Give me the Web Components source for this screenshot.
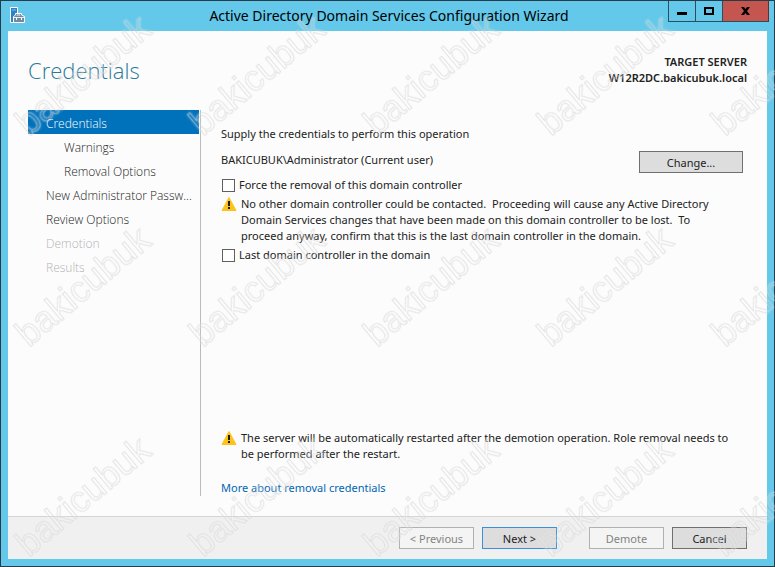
<!DOCTYPE html>
<html lang="en">
<head>
  <meta charset="utf-8">
  <title>Active Directory Domain Services Configuration Wizard</title>
  <style>
    body {
      margin: 0;
      background: #63c8ea;
    }
  </style>
</head>
<body>
  <wizard-window>
    <title-bar slot="title">Active Directory Domain Services Configuration Wizard</title-bar>
    <page-header slot="header" heading="Credentials" server="W12R2DC.bakicubuk.local"></page-header>
    <step-list slot="steps">
      <step-item state="current">Credentials</step-item>
      <step-item level="2">Warnings</step-item>
      <step-item level="2">Removal Options</step-item>
      <step-item>New Administrator Passw...</step-item>
      <step-item>Review Options</step-item>
      <step-item state="disabled">Demotion</step-item>
      <step-item state="disabled">Results</step-item>
    </step-list>
    <credentials-page></credentials-page>
    <wizard-button slot="buttons" disabled>&lt; Previous</wizard-button>
    <wizard-button slot="buttons" primary>Next &gt;</wizard-button>
    <wizard-button slot="actions" disabled>Demote</wizard-button>
    <wizard-button slot="actions">Cancel</wizard-button>
  </wizard-window>
  <water-mark text="bakicubuk"></water-mark>

  <script>
    class WizardWindow extends HTMLElement {
      constructor() {
        super();
        this.attachShadow({ mode: 'open' }).innerHTML = `
          <style>
            :host {
              display: flex;
              flex-direction: column;
              box-sizing: border-box;
              min-height: 100vh;
              padding-bottom: 7px;
              border: 1px solid #263c48;
              background: #63c8ea;
              color: #222;
              font: 11px/16px "Noto Sans", "Open Sans", sans-serif;
            }
            .client {
              flex: 1;
              display: flex;
              flex-direction: column;
              margin: 0 7px;
              background: #fcfcfc;
            }
            .body {
              flex: 1;
              display: grid;
              grid-template-columns: 172px 1fr;
              padding: 0 20px;
            }
            footer {
              display: flex;
              justify-content: flex-end;
              gap: 32px;
              padding: 10px 20px;
              border-top: 1px solid #d4d4d4;
              background: #f0f0f0;
            }
            .group {
              display: flex;
              gap: 8px;
            }
            main {
              display: flex;
              flex-direction: column;
              margin-bottom: 20px;
              padding-left: 20px;
              border-left: 1px solid #bbb;
            }
          </style>
          <slot name="title"></slot>
          <div class="client">
            <slot name="header"></slot>
            <div class="body">
              <slot name="steps"></slot>
              <main><slot></slot></main>
            </div>
            <footer>
              <div class="group"><slot name="buttons"></slot></div>
              <div class="group"><slot name="actions"></slot></div>
            </footer>
          </div>
        `;
      }
    }

    class TitleBar extends HTMLElement {
      constructor() {
        super();
        this.attachShadow({ mode: 'open' }).innerHTML = `
          <style>
            :host {
              display: grid;
              grid-template-columns: 1fr auto 1fr;
              height: 30px;
              padding: 0 5px 0 8px;
              color: #000;
              font-size: 14px;
              line-height: 30px;
              white-space: nowrap;
            }
            .icon {
              margin-top: 6px;
            }
            .controls {
              display: flex;
              justify-content: flex-end;
              align-items: flex-start;
            }
            button {
              display: flex;
              align-items: center;
              justify-content: center;
              box-sizing: border-box;
              width: 27px;
              height: 21px;
              margin: 0;
              padding: 0;
              border: 1px solid #2c4d5c;
              border-top: 0;
              border-right: 0;
              background: none;
            }
            .close {
              width: 47px;
              border-right: 1px solid #6b2d28;
              background: #c4564f;
            }
          </style>
          <svg class="icon" width="17" height="17" viewBox="0 0 17 17">
            <path d="M1.500 .5h7v15h-7z" fill="#2a85c8" stroke="#fff"/>
            <path d="M3 3h4" stroke="#7fbce2"/>
            <path d="M4.500 9.500L6.500 8V6.500h6V8l3 1.500v6h-11z" fill="#74899c" stroke="#fff"/>
            <path d="M8 8.500V8h3v.5" fill="none" stroke="#dfe9f2"/>
            <path d="M5 10.500h10" stroke="#e8eef4"/>
            <path d="M7.500 11v2M12.500 11v2" stroke="#fff"/>
          </svg>
          <slot></slot>
          <div class="controls">
            <button aria-label="Minimize">
              <svg width="10" height="10"><path d="M0 6h10v3H0z"/></svg>
            </button>
            <button aria-label="Maximize">
              <svg width="10" height="8"><path d="M1 1h8v6H1z" fill="none" stroke="#000" stroke-width="2"/></svg>
            </button>
            <button class="close" aria-label="Close">
              <svg width="9" height="8"><path d="M0 0h3l1.500 2L6 0h3L6 4l3 4H6L4.500 6 3 8H0l3-4z"/></svg>
            </button>
          </div>
        `;
      }
    }

    class PageHeader extends HTMLElement {
      connectedCallback() {
        this.attachShadow({ mode: 'open' }).innerHTML = `
          <style>
            :host {
              display: flex;
              justify-content: space-between;
              padding: 23px 20px 24px;
            }
            h1 {
              margin: 0;
              color: #2b7a9b;
              font-family: "Open Sans", sans-serif;
              font-size: 22px;
              font-weight: 300;
              line-height: 32px;
            }
            .server {
              font-weight: 600;
              text-align: right;
            }
          </style>
          <h1>${this.getAttribute('heading')}</h1>
          <div class="server">
            <div>TARGET SERVER</div>
            <div>${this.getAttribute('server')}</div>
          </div>
        `;
      }
    }

    class StepList extends HTMLElement {
      constructor() {
        super();
        this.attachShadow({ mode: 'open' }).innerHTML = `
          <style>
            nav {
              margin-right: 1px;
            }
          </style>
          <nav><slot></slot></nav>
        `;
      }
    }

    class StepItem extends HTMLElement {
      constructor() {
        super();
        this.attachShadow({ mode: 'open' }).innerHTML = `
          <style>
            :host {
              display: block;
              padding: 4px 0 0 18px;
              color: #222;
              font-family: "Open Sans", sans-serif;
              font-size: 12px;
              font-weight: 300;
              line-height: 20px;
              white-space: nowrap;
            }
            :host([level="2"]) {
              padding-left: 36px;
            }
            :host([state="current"]) {
              background: #0072bc;
              color: #fff;
            }
            :host([state="disabled"]) {
              color: #b4b4b4;
            }
          </style>
          <slot></slot>
        `;
      }
    }

    class WizardButton extends HTMLElement {
      connectedCallback() {
        const disabled = this.hasAttribute('disabled') ? 'disabled' : '';
        this.attachShadow({ mode: 'open' }).innerHTML = `
          <style>
            :host {
              display: block;
              width: 75px;
            }
            button {
              display: block;
              box-sizing: border-box;
              width: 100%;
              height: 22px;
              margin: 0;
              padding: 1px 0 0;
              border: 1px solid #707070;
              background: #ddd;
              color: #222;
              font: inherit;
              line-height: 20px;
            }
            button:disabled {
              border-color: #adb2b5;
              background: #f4f4f4;
              color: #838383;
            }
            :host([primary]) button {
              border-color: #3c8fde;
            }
          </style>
          <button ${disabled}><slot></slot></button>
        `;
      }
    }

    class CheckOption extends HTMLElement {
      constructor() {
        super();
        this.attachShadow({ mode: 'open' }).innerHTML = `
          <style>
            :host {
              display: block;
            }
            label {
              display: flex;
              align-items: center;
              gap: 4px;
            }
            input {
              appearance: none;
              box-sizing: border-box;
              width: 13px;
              height: 13px;
              margin: 0 0 0 1px;
              border: 1px solid #606060;
              background: #fff;
            }
          </style>
          <label><input type="checkbox"><slot></slot></label>
        `;
      }
    }

    class WarningNote extends HTMLElement {
      constructor() {
        super();
        this.attachShadow({ mode: 'open' }).innerHTML = `
          <style>
            :host {
              display: flex;
              gap: 4px;
            }
            svg {
              flex: none;
            }
            div {
              white-space: pre-wrap;
            }
          </style>
          <svg width="16" height="16" viewBox="0 0 16 16">
            <path d="M8 1.500L15 14.500H1z" fill="#fcc419" stroke="#fcc419" stroke-linejoin="round"/>
            <path d="M7 5h2v5H7zM7 11h2v2H7z" fill="#1e1e1e"/>
          </svg>
          <div><slot></slot></div>
        `;
      }
    }

    class CredentialsPage extends HTMLElement {
      constructor() {
        super();
        this.attachShadow({ mode: 'open' }).innerHTML = `
          <style>
            :host {
              flex: 1;
              display: flex;
              flex-direction: column;
              padding-top: 16px;
            }
            .account {
              display: flex;
              justify-content: space-between;
              align-items: flex-start;
              margin: 9px 4px 4px 0;
            }
            .account span {
              line-height: 18px;
            }
            .account wizard-button {
              width: 104px;
            }
            .options {
              display: flex;
              flex-direction: column;
              gap: 3px;
            }
            .bottom {
              margin-top: auto;
            }
            a {
              display: inline-block;
              margin-top: 18px;
              color: #0066b3;
              text-decoration: none;
            }
          </style>
          <div>Supply the credentials to perform this operation</div>
          <div class="account">
            <span>BAKICUBUK\\Administrator (Current user)</span>
            <wizard-button>Change...</wizard-button>
          </div>
          <div class="options">
            <check-option>Force the removal of this domain controller</check-option>
            <warning-note>No other domain controller could be contacted.  Proceeding will cause any Active Directory
Domain Services changes that have been made on this domain controller to be lost.  To
proceed anyway, confirm that this is the last domain controller in the domain.</warning-note>
            <check-option>Last domain controller in the domain</check-option>
          </div>
          <div class="bottom">
            <warning-note>The server will be automatically restarted after the demotion operation. Role removal needs to
be performed after the restart.</warning-note>
            <a href="#">More about removal credentials</a>
          </div>
        `;
      }
    }

    // Repeats the embossed text diagonally over everything below it
    class WaterMark extends HTMLElement {
      connectedCallback() {
        const text = this.getAttribute('text');
        let marks = '';
        for (const y of [137, 348, 558]) {
          for (const x of [29, 203, 377, 551, 725]) {
            marks += `<text transform="translate(${x} ${y}) rotate(-40)">${text}</text>`;
          }
        }
        this.attachShadow({ mode: 'open' }).innerHTML = `
          <style>
            :host {
              position: absolute;
              inset: 0;
              overflow: hidden;
              pointer-events: none;
            }
            text {
              fill: none;
              stroke: rgba(205, 205, 205, 0.55);
              font: 36px "Liberation Sans", Arial, sans-serif;
              filter: drop-shadow(0 0 1px rgba(255, 255, 255, 0.8));
            }
          </style>
          <svg width="100%" height="100%" aria-hidden="true">${marks}</svg>
        `;
      }
    }

    customElements.define('wizard-window', WizardWindow);
    customElements.define('title-bar', TitleBar);
    customElements.define('page-header', PageHeader);
    customElements.define('step-list', StepList);
    customElements.define('step-item', StepItem);
    customElements.define('wizard-button', WizardButton);
    customElements.define('check-option', CheckOption);
    customElements.define('warning-note', WarningNote);
    customElements.define('credentials-page', CredentialsPage);
    customElements.define('water-mark', WaterMark);
  </script>
</body>
</html>
